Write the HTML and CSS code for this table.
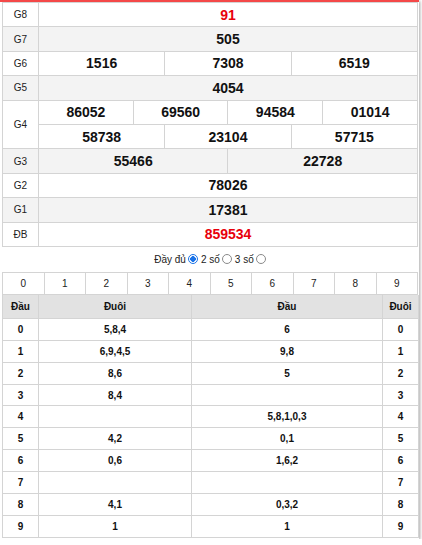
FILE: index.html
```html
<!DOCTYPE html>
<html lang="vi">
<head>
<meta charset="utf-8">
<link rel="stylesheet" href="styles.css">
</head>
<body>
<div class="box">
  <table class="kq">
    <colgroup>
      <col class="c-lbl">
      <col><col><col><col><col><col><col><col><col><col><col><col>
    </colgroup>
    <tr><td class="lbl">G8</td><td colspan="12" class="num red">91</td></tr>
    <tr class="alt"><td class="lbl">G7</td><td colspan="12" class="num">505</td></tr>
    <tr><td class="lbl">G6</td><td colspan="4" class="num">1516</td><td colspan="4" class="num">7308</td><td colspan="4" class="num">6519</td></tr>
    <tr class="alt"><td class="lbl">G5</td><td colspan="12" class="num">4054</td></tr>
    <tr><td class="lbl" rowspan="2">G4</td><td colspan="3" class="num">86052</td><td colspan="3" class="num">69560</td><td colspan="3" class="num">94584</td><td colspan="3" class="num">01014</td></tr>
    <tr><td colspan="4" class="num">58738</td><td colspan="4" class="num">23104</td><td colspan="4" class="num">57715</td></tr>
    <tr class="alt"><td class="lbl">G3</td><td colspan="6" class="num">55466</td><td colspan="6" class="num">22728</td></tr>
    <tr><td class="lbl">G2</td><td colspan="12" class="num">78026</td></tr>
    <tr class="alt"><td class="lbl">G1</td><td colspan="12" class="num">17381</td></tr>
    <tr><td class="lbl">ĐB</td><td colspan="12" class="num red">859534</td></tr>
  </table>

  <div class="opts">
    <label class="opt">Đầy đủ <span class="radio on"></span></label>
    <label class="opt">2 số <span class="radio"></span></label>
    <label class="opt">3 số <span class="radio"></span></label>
  </div>

  <table class="digits">
    <tr><td>0</td><td>1</td><td>2</td><td>3</td><td>4</td><td>5</td><td>6</td><td>7</td><td>8</td><td>9</td></tr>
  </table>

  <table class="loto">
    <colgroup><col class="l1"><col class="l2"><col class="l3"><col class="l4"></colgroup>
    <tr class="head"><th>Đầu</th><th>Đuôi</th><th>Đầu</th><th>Đuôi</th></tr>
    <tr><td>0</td><td>5,8,4</td><td>6</td><td>0</td></tr>
    <tr><td>1</td><td>6,9,4,5</td><td>9,8</td><td>1</td></tr>
    <tr><td>2</td><td>8,6</td><td>5</td><td>2</td></tr>
    <tr><td>3</td><td>8,4</td><td></td><td>3</td></tr>
    <tr><td>4</td><td></td><td>5,8,1,0,3</td><td>4</td></tr>
    <tr><td>5</td><td>4,2</td><td>0,1</td><td>5</td></tr>
    <tr><td>6</td><td>0,6</td><td>1,6,2</td><td>6</td></tr>
    <tr><td>7</td><td></td><td></td><td>7</td></tr>
    <tr><td>8</td><td>4,1</td><td>0,3,2</td><td>8</td></tr>
    <tr><td>9</td><td>1</td><td>1</td><td>9</td></tr>
  </table>
</div>
</body>
</html>
```

FILE: styles.css
```css
html, body {
  margin: 0;
  padding: 0;
  background: #fff;
}
body {
  font-family: Arial, "Liberation Sans", sans-serif;
  color: #222;
}
.box {
  width: 419px;
  box-sizing: border-box;
  border-top: 2px solid #f44848;
  padding: 0 1px 1px 2px;
  box-shadow: 1px 1px 3px rgba(0, 0, 0, 0.35);
}
table {
  border-collapse: collapse;
  width: 416px;
  table-layout: fixed;
}
td, th {
  border: 1px solid #d4d4d4;
  padding: 0;
  text-align: center;
}
.kq .c-lbl {
  width: 36px;
}
.kq td {
  height: 23.4px;
}
.kq .alt td {
  background: #f3f3f3;
}
.kq .lbl {
  font-size: 10px;
  color: #222;
}
.kq .num {
  font-size: 14px;
  font-weight: bold;
  color: #111;
}
.kq .num.red {
  color: #e8000b;
}
.opts {
  height: 25px;
  display: flex;
  align-items: center;
  justify-content: center;
  gap: 3px;
  font-size: 10px;
  color: #222;
}
.opt {
  display: inline-flex;
  align-items: center;
  gap: 2px;
}
.radio {
  display: inline-block;
  width: 8px;
  height: 8px;
  border: 1px solid #8a8a8a;
  border-radius: 50%;
  box-sizing: content-box;
  background: #fff;
}
.radio.on {
  border-color: #1a73e8;
  background: radial-gradient(circle, #1a73e8 0 2.6px, #fff 3px);
}
.digits td {
  height: 21px;
  font-size: 10px;
  color: #222;
}
.loto {
  border-top: none;
}
.loto .l1 { width: 36px; }
.loto .l2 { width: 153px; }
.loto .l3 { width: 191px; }
.loto .l4 { width: 36px; }
.loto tr.head th {
  border-top: none;
  height: 23px;
  background: #e2e2e2;
  font-size: 10px;
  font-weight: bold;
  color: #111;
}
.loto td {
  height: 20.9px;
  font-size: 10px;
  font-weight: bold;
  color: #111;
}
```
